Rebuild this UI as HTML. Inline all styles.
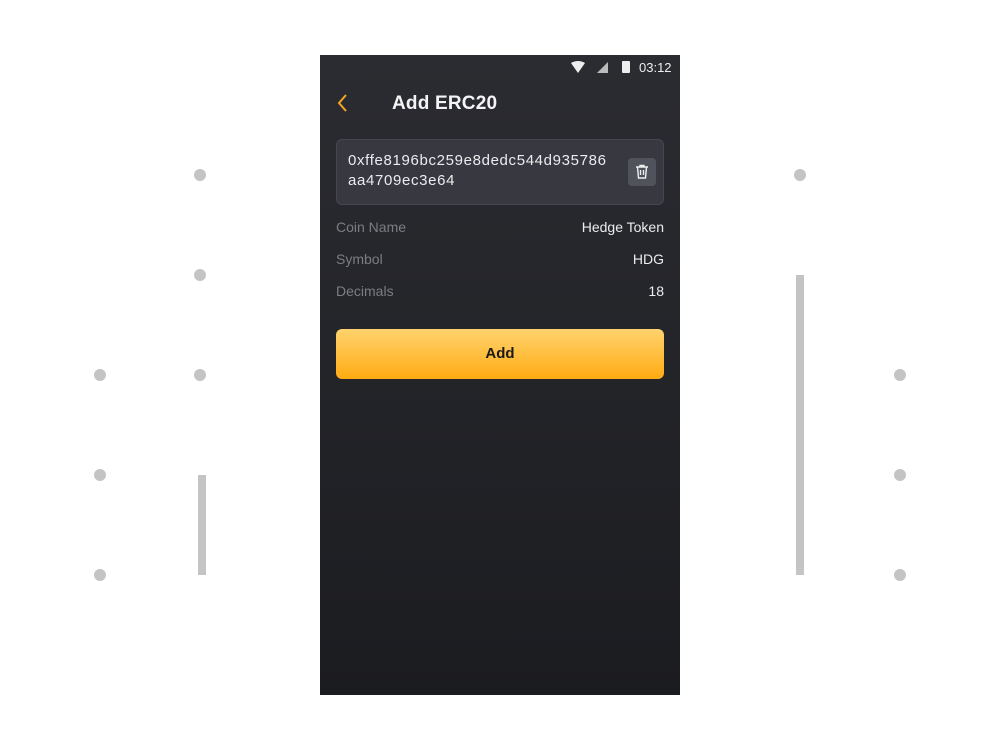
<!DOCTYPE html>
<html><head><style>
body{margin:0;width:1000px;height:750px;background:#fff;position:relative;overflow:hidden;font-family:"Liberation Sans",sans-serif}
.d{position:absolute;width:12px;height:12px;border-radius:50%;background:#c4c4c4}
.b{position:absolute;width:8px;background:#c4c4c4}
.ph{position:absolute;left:320px;top:55px;width:360px;height:640px;background:linear-gradient(#2b2c31,#1b1c20)}
.t{position:absolute;white-space:nowrap}
.l{color:#7c7d82;font-size:14px;left:16px}
.r{color:#ececee;font-size:14px;right:16px}
</style></head><body>
<div class="d" style="left:194px;top:169px"></div>
<div class="d" style="left:194px;top:269px"></div>
<div class="d" style="left:194px;top:369px"></div>
<div class="d" style="left:94px;top:369px"></div>
<div class="d" style="left:94px;top:469px"></div>
<div class="d" style="left:94px;top:569px"></div>
<div class="d" style="left:794px;top:169px"></div>
<div class="d" style="left:894px;top:369px"></div>
<div class="d" style="left:894px;top:469px"></div>
<div class="d" style="left:894px;top:569px"></div>
<div class="b" style="left:198px;top:475px;height:100px"></div>
<div class="b" style="left:796px;top:275px;height:300px"></div>
<div class="ph">
<svg style="position:absolute;left:250px;top:6px" width="20" height="14"><path d="M1 2Q8-2 15 2L8 12Z" fill="#eee"/></svg>
<svg style="position:absolute;left:276px;top:6px" width="14" height="14"><path d="M12 1V12H1Z" fill="#bbb"/></svg>
<div style="position:absolute;left:302px;top:6px;width:8px;height:12px;background:#eee;border-radius:1px"></div>
<div class="t" style="left:319px;top:5px;color:#eee;font-size:13px">03:12</div>
<svg style="position:absolute;left:16px;top:38px" width="14" height="20"><path d="M10 2L3 10L10 18" stroke="#f5a623" stroke-width="2" fill="none"/></svg>
<div class="t" style="left:72px;top:38px;color:#f4f4f6;font-size:19px;font-weight:bold;letter-spacing:0.2px">Add ERC20</div>
<div style="position:absolute;left:16px;top:84px;width:326px;height:64px;background:#373840;border:1px solid #45464e;border-radius:6px"></div>
<div class="t" style="left:28px;top:96px;color:#ececee;font-size:15px;line-height:20px;letter-spacing:0.65px">0xffe8196bc259e8dedc544d935786<br>aa4709ec3e64</div>
<div style="position:absolute;left:308px;top:103px;width:28px;height:28px;background:#50525c;border-radius:4px"></div>
<svg style="position:absolute;left:314px;top:109px" width="16" height="16"><path d="M2 3H14M6 3V1.5H10V3M3.5 3L4.5 14H11.5L12.5 3M6.5 6V11M9.5 6V11" stroke="#eee" stroke-width="1.4" fill="none"/></svg>
<div class="t l" style="top:164px">Coin Name</div><div class="t r" style="top:164px">Hedge Token</div>
<div class="t l" style="top:196px">Symbol</div><div class="t r" style="top:196px">HDG</div>
<div class="t l" style="top:228px">Decimals</div><div class="t r" style="top:228px">18</div>
<div style="position:absolute;left:16px;top:274px;width:328px;height:50px;border-radius:6px;background:linear-gradient(#ffd36e,#ffab12);text-align:center;line-height:50px;font-size:15px;font-weight:bold;color:#1a1a1a">Add</div>
</div>
</body></html>
